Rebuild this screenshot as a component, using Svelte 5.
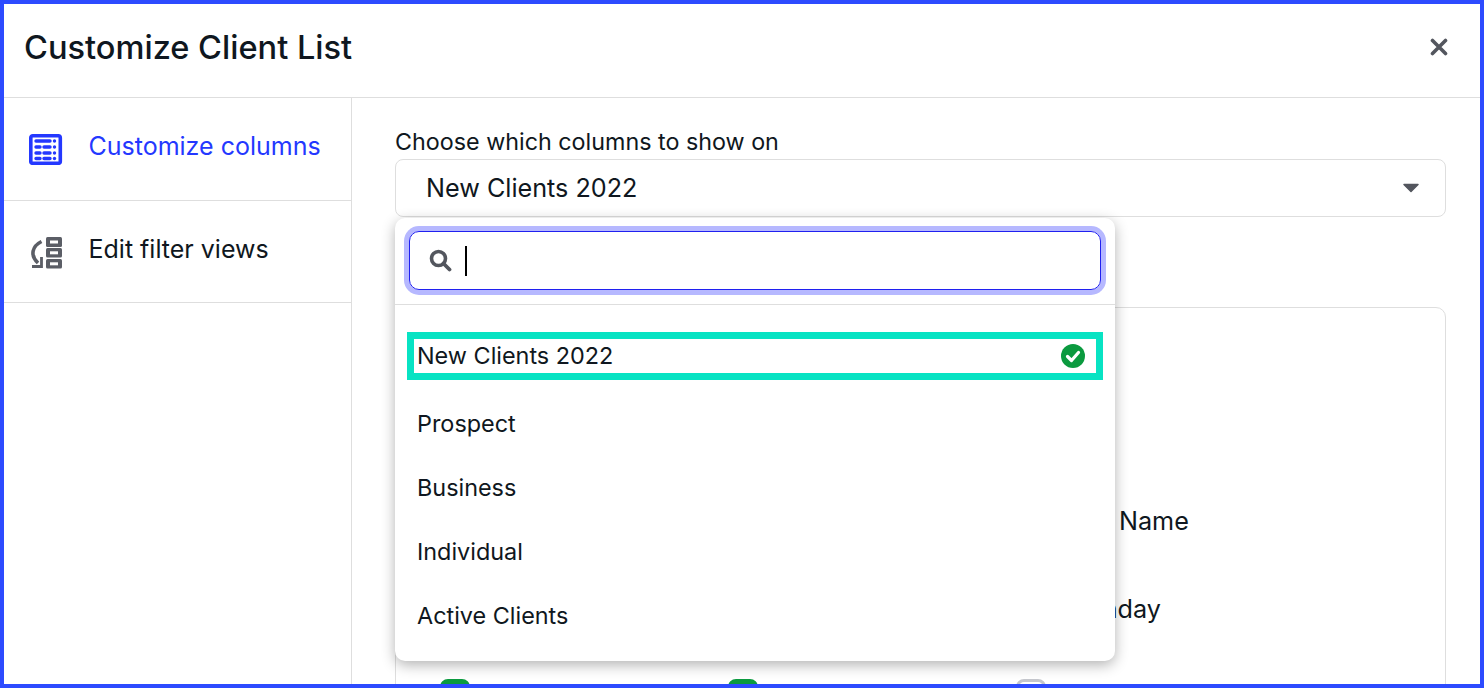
<script>
  const options = ['Prospect', 'Business', 'Individual', 'Active Clients']

  const columns = [
    [null, null, { label: 'Last Name', on: true }],
    [null, null, { label: 'Birthday', on: true }],
    [{ label: '', on: true }, { label: '', on: true }, { label: '', on: false }]
  ]
  const tableRows = [14, 20, 25.5]
</script>

<div class="dialog">
  <header class="head">
    <h1>Customize Client List</h1>
    <button class="close" aria-label="Close">
      <svg width="18" height="18" viewBox="0 0 18 18">
        <path d="M2.5 2.5 15.5 15.5M15.5 2.5 2.5 15.5" stroke="#53565e" stroke-width="3.6" stroke-linecap="round" fill="none" />
      </svg>
    </button>
  </header>

  <div class="body">
    <nav class="side">
      <div class="side-item active">
        <svg width="34" height="32" viewBox="0 0 34 32">
          <rect x="1.800" y="2.800" width="29.500" height="27.500" rx="2" fill="none" stroke="currentColor" stroke-width="3.600" />
          <path d="M7 8h14" stroke="currentColor" stroke-width="3.400" stroke-linecap="round" />
          <circle cx="25.500" cy="8" r="1.700" fill="currentColor" />
          {#each tableRows as y}
            <path d="M7 {y}h4M15 {y}h6" stroke="currentColor" stroke-width="3.400" stroke-linecap="round" />
            <circle cx="25.500" cy={y} r="1.700" fill="currentColor" />
          {/each}
        </svg>
        <span>Customize columns</span>
      </div>
      <div class="side-item">
        <svg width="34" height="34" viewBox="0 0 34 34">
          <path d="M12.500 6.500C3.500 11 0.500 20 9 28" fill="none" stroke="#5b5e66" stroke-width="3.600" />
          <path d="M3 31.500H12.500V22" fill="none" stroke="#5b5e66" stroke-width="2.800" />
          <rect x="17" y="2" width="16" height="10" rx="1.500" fill="#5b5e66" />
          <rect x="21" y="5.500" width="8" height="3" fill="#fff" />
          <rect x="17" y="13" width="16" height="9.500" rx="1.500" fill="#5b5e66" />
          <rect x="21" y="16.300" width="8" height="3" fill="#fff" />
          <rect x="17" y="24" width="16" height="9.500" rx="1.500" fill="#5b5e66" />
          <rect x="21" y="27.300" width="8" height="3" fill="#fff" />
        </svg>
        <span>Edit filter views</span>
      </div>
    </nav>

    <main class="content">
      <div class="field-label">Choose which columns to show on</div>
      <div class="select">
        <span>New Clients 2022</span>
        <svg width="18" height="10" viewBox="0 0 18 10">
          <path d="M2 1.500h14L9 8.500z" fill="#53565e" stroke="#53565e" stroke-width="1.500" stroke-linejoin="round" />
        </svg>
      </div>

      <div class="card">
        {#each columns as row}
          {#each row as col}
            <div class="col">
              {#if col}
                <span class="check" class:on={col.on}></span>
                <span>{col.label}</span>
              {/if}
            </div>
          {/each}
        {/each}
      </div>

      <div class="popover">
        <div class="search-wrap">
          <div class="search">
            <svg width="24" height="24" viewBox="0 0 24 24">
              <circle cx="10.500" cy="9.500" r="7" fill="none" stroke="#53565e" stroke-width="3.600" />
              <path d="M15.500 14.500 21.500 20.500" stroke="#53565e" stroke-width="3.800" stroke-linecap="round" />
            </svg>
            <span class="caret"></span>
          </div>
        </div>
        <div class="list">
          <div class="picked">
            <span>New Clients 2022</span>
            <svg width="24" height="24" viewBox="0 0 24 24">
              <circle cx="12" cy="12" r="12" fill="#0b9a3f" />
              <path d="M6.500 12.500 10.500 16.500 17.500 8.500" fill="none" stroke="#fff" stroke-width="3.200" stroke-linecap="round" stroke-linejoin="round" />
            </svg>
          </div>
          {#each options as option}
            <div class="option"><span>{option}</span></div>
          {/each}
        </div>
      </div>
    </main>
  </div>
</div>

<style>
  :global(body) {
    margin: 0;
  }

  .dialog {
    box-sizing: border-box;
    width: 1484px;
    height: 688px;
    border: 4px solid #2d4bff;
    overflow: hidden;
    background: #fff;
    color: #0f1720;
    font-family: Inter, "Noto Sans", sans-serif;
    font-size: 25.2px;
    display: flex;
    flex-direction: column;
  }

  .head {
    flex: none;
    box-sizing: border-box;
    height: 94px;
    border-bottom: 1px solid #dedede;
    display: flex;
    align-items: center;
    justify-content: space-between;
    padding: 0 32px 7px 20px;
  }

  h1 {
    margin: 0;
    font-size: 32.6px;
    font-weight: 500;
  }

  .close {
    border: none;
    background: none;
    padding: 0;
    display: flex;
  }

  .body {
    flex: 1;
    display: flex;
    min-height: 0;
  }

  .side {
    flex: none;
    width: 347px;
    border-right: 1px solid #dedede;
  }

  .side-item {
    height: 102px;
    box-sizing: border-box;
    border-bottom: 1px solid #dedede;
    display: flex;
    align-items: center;
    gap: 25.5px;
    padding-left: 25px;
    font-size: 25px;
  }

  .side-item span {
    padding-bottom: 6px;
  }

  .side-item.active {
    color: #2438ff;
    height: 103px;
  }

  .content {
    flex: 1;
    position: relative;
    padding: 29px 34px 0 43px;
  }

  .field-label {
    font-size: 23.3px;
    line-height: 30px;
    margin-bottom: 2px;
  }

  .select {
    height: 58px;
    box-sizing: border-box;
    border: 1px solid #dedede;
    border-radius: 8px;
    display: flex;
    align-items: center;
    justify-content: space-between;
    padding: 0 25px 0 30px;
  }

  .card {
    margin-top: 90px;
    box-sizing: border-box;
    height: 500px;
    border: 1px solid #dedede;
    border-radius: 10px;
    padding: 195px 0 0 44px;
    display: grid;
    grid-template-columns: 288px 288px 288px;
    grid-auto-rows: 88px;
  }

  .col {
    display: flex;
    align-items: flex-start;
    gap: 16px;
    line-height: 36px;
  }

  .check {
    flex: none;
    box-sizing: border-box;
    width: 30px;
    height: 30px;
    border-radius: 8px;
    border: 3px solid #c4c6cc;
    background: #fff;
  }

  .check.on {
    background: #0b9a3f;
    border-color: #0b9a3f;
  }

  .popover {
    position: absolute;
    left: 43px;
    top: 120px;
    width: 720px;
    height: 443px;
    background: #fff;
    border-radius: 10px;
    box-shadow: 0 4px 14px rgba(0, 0, 0, 0.3);
    font-size: 23.4px;
  }

  .search-wrap {
    height: 87px;
    border-bottom: 1px solid #dedede;
    padding: 13px 14px 0;
    box-sizing: border-box;
  }

  .search {
    height: 59px;
    box-sizing: border-box;
    border: 1.500px solid #2020f0;
    border-radius: 10px;
    box-shadow: 0 0 0 5px #b6b8ff;
    display: flex;
    align-items: center;
    gap: 13px;
    padding-left: 18px;
  }

  .caret {
    width: 2px;
    height: 30px;
    background: #000;
  }

  .list {
    padding-top: 27px;
  }

  .picked {
    box-sizing: border-box;
    height: 48px;
    margin: 0 12px 12px;
    border: 7px solid #07e3c3;
    padding: 0 11px 0 3px;
    display: flex;
    align-items: center;
    justify-content: space-between;
  }

  .picked span,
  .option span {
    padding-bottom: 2px;
  }

  .option {
    height: 64px;
    display: flex;
    align-items: center;
    padding-left: 22px;
  }
</style>
